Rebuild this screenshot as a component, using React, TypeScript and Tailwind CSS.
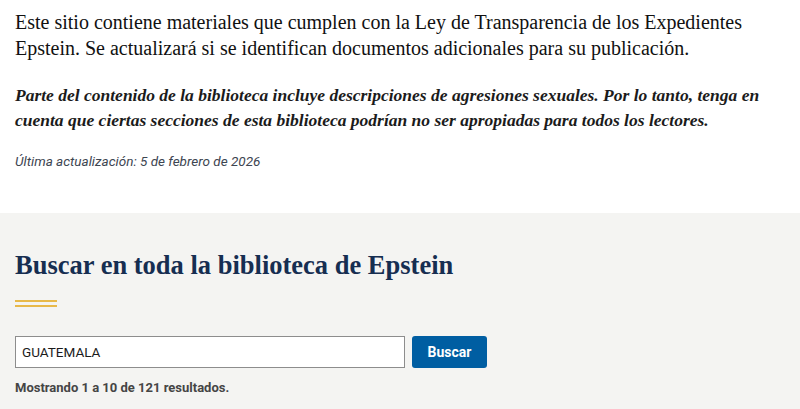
import React from 'react';

const serif = { fontFamily: '"Liberation Serif", "DejaVu Serif", serif' };

export default function App() {
  return (
    <div className="w-[800px] h-[409px] overflow-hidden bg-white text-[#1b1b1b]">
      <section className="h-[213px] px-[15px] pt-[9px]">
        <p className="text-[20px] leading-[26px] text-[#111]" style={serif}>
          Este sitio contiene materiales que cumplen con la Ley de Transparencia de los Expedientes Epstein. Se actualizará si se identifican documentos adicionales para su publicación.
        </p>
        <p className="mt-[22px] text-[17.5px] leading-[25px] italic font-bold text-[#1b1b1b]" style={serif}>
          Parte del contenido de la biblioteca incluye descripciones de agresiones sexuales. Por lo tanto, tenga en cuenta que ciertas secciones de esta biblioteca podrían no ser apropiadas para todos los lectores.
        </p>
        <p className="mt-[19px] text-[13.5px] leading-[18px] italic text-[#3d4551] font-['Roboto',sans-serif]">
          Última actualización: 5 de febrero de 2026
        </p>
      </section>
      <section className="bg-[#f4f4f2] px-[15px] pt-[35px] h-[196px]">
        <h2 className="text-[26.5px] leading-[34px] font-bold text-[#162e51]" style={serif}>
          Buscar en toda la biblioteca de Epstein
        </h2>
        <div className="mt-[18px] w-[42px] flex flex-col gap-[3px]">
          <div className="h-[2px] bg-[#e8b94a]" />
          <div className="h-[2px] bg-[#e8b94a]" />
        </div>
        <form className="mt-[29px] flex items-center gap-[7px]" onSubmit={e => e.preventDefault()}>
          <input
            defaultValue="GUATEMALA"
            className="w-[390px] h-[32px] border border-[#8d8d8d] bg-white px-[6px] text-[13.5px] text-[#1b1b1b] outline-none font-['Roboto',sans-serif]"
          />
          <button className="h-[32px] w-[75px] rounded-[3px] bg-[#005ea2] text-white text-[14px] font-bold font-['Roboto',sans-serif]">
            Buscar
          </button>
        </form>
        <p className="mt-[10px] text-[13px] font-bold text-[#454545] font-['Roboto',sans-serif]">
          Mostrando 1 a 10 de 121 resultados.
        </p>
      </section>
    </div>
  );
}
